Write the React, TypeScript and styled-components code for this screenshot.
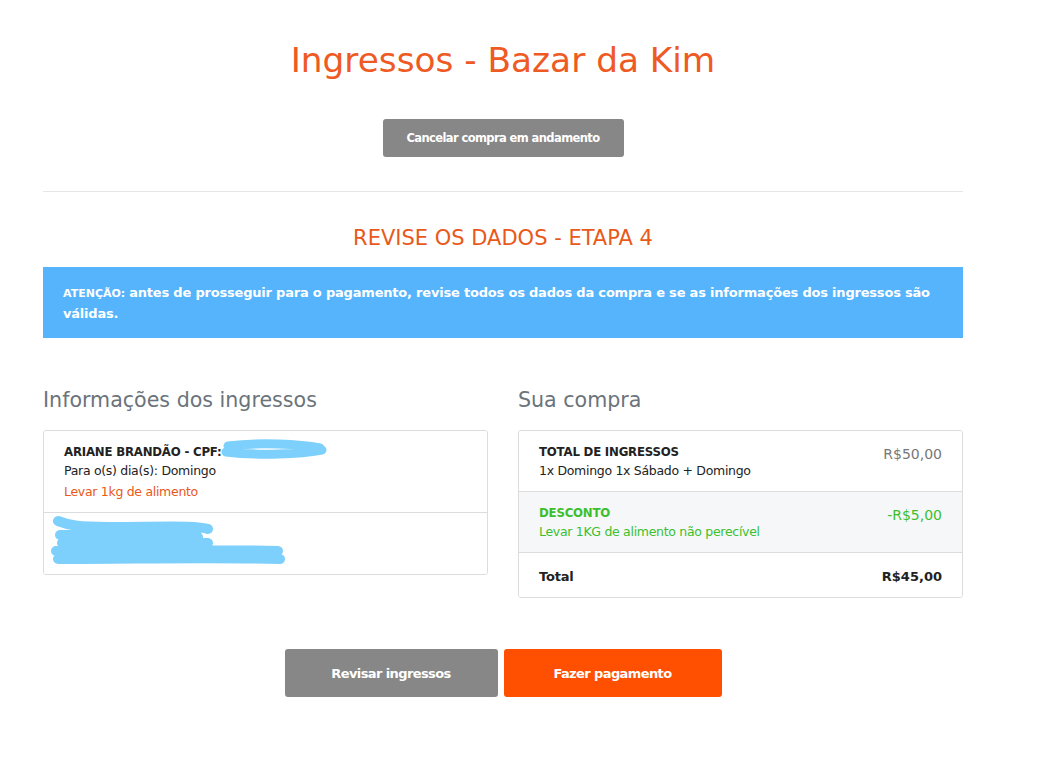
import React from "react";
import styled, { createGlobalStyle } from "styled-components";

const Global = createGlobalStyle`
  html, body { margin: 0; padding: 0; background: #fff; }
  body { font-family: "DejaVu Sans", "Open Sans", sans-serif; color: #333; }
  * { box-sizing: border-box; }
`;

const Container = styled.div`
  width: 950px;
  margin-left: 28px;
  padding: 0 15px;
`;

const Title = styled.h1`
  margin: 0;
  padding-top: 38px;
  text-align: center;
  font-size: 34.3px;
  font-weight: 400;
  color: #ee5a24;
  line-height: 44px;
`;

const CenterRow = styled.div<{ $top: number }>`
  display: flex;
  justify-content: center;
  gap: 6px;
  margin-top: ${(p) => p.$top}px;
`;

const Button = styled.button<{ $variant: "gray" | "orange"; $w: number; $h: number }>`
  width: ${(p) => p.$w}px;
  height: ${(p) => p.$h}px;
  border: 0;
  border-radius: 3px;
  background: ${(p) => (p.$variant === "orange" ? "#fe5000" : "#878787")};
  color: #fff;
  font-family: inherit;
  font-weight: 700;
  font-size: ${(p) => (p.$h > 40 ? 13 : 11.5)}px;
  letter-spacing: -0.6px;
  cursor: pointer;
`;

const Rule = styled.hr`
  border: 0;
  border-top: 1px solid #e6e6e6;
  margin: 34px 0 0;
`;

const StepTitle = styled.h2`
  margin: 32px 0 0;
  text-align: center;
  font-size: 21px;
  font-weight: 400;
  color: #e8591a;
  line-height: 28px;
`;

const Alert = styled.div`
  margin-top: 15px;
  background: #56b4fc;
  color: #fff;
  padding: 16px 20px 15px 20px;
  font-size: 13px;
  line-height: 20px;
  font-weight: 600;
  letter-spacing: -0.2px;
  height: 71px;
`;

const AlertLabel = styled.strong`
  font-size: 11px;
  font-weight: 800;
  letter-spacing: 0;
  margin-right: 4px;
`;

const AlertText = styled.span`
  font-weight: 600;
`;

const Columns = styled.div`
  display: grid;
  grid-template-columns: 1fr 1fr;
  column-gap: 30px;
  margin-top: 47px;
`;

const ColTitle = styled.h3`
  margin: 0 0 15px;
  font-size: 20.6px;
  font-weight: 400;
  color: #6b737b;
  line-height: 30px;
`;

const Card = styled.div`
  border: 1px solid #dcdcdc;
  border-radius: 3px;
  overflow: hidden;
`;

const Item = styled.div<{ $shade?: boolean; $h: number; $pt?: number }>`
  height: ${(p) => p.$h}px;
  padding: ${(p) => p.$pt ?? 12}px 20px 0;
  background: ${(p) => (p.$shade ? "#f5f7f8" : "#fff")};
  display: flex;
  justify-content: space-between;
  position: relative;
  & + & {
    border-top: 1px solid #dcdcdc;
  }
`;

const Lines = styled.div`
  display: flex;
  flex-direction: column;
`;

const Strong = styled.div<{ $green?: boolean; $big?: boolean }>`
  font-weight: 700;
  font-size: ${(p) => (p.$big ? 13 : 11.75)}px;
  line-height: 18px;
  letter-spacing: -0.2px;
  color: ${(p) => (p.$green ? "#3cbf2e" : "#222")};
`;

const Small = styled.div<{ $tone?: "orange" | "green" }>`
  font-size: 12.5px;
  line-height: 19px;
  letter-spacing: -0.3px;
  color: ${(p) => (p.$tone === "orange" ? "#e8591a" : p.$tone === "green" ? "#3cbf2e" : "#222")};
  margin-top: ${(p) => (p.$tone === "orange" ? 2 : 0)}px;
`;

const Price = styled.div<{ $tone: "gray" | "green" | "bold" }>`
  font-size: ${(p) => (p.$tone === "bold" ? 13 : 14)}px;
  line-height: 18px;
  padding-top: ${(p) => (p.$tone === "bold" ? 0 : 2)}px;
  font-weight: ${(p) => (p.$tone === "bold" ? 700 : 400)};
  color: ${(p) => (p.$tone === "green" ? "#3cbf2e" : p.$tone === "gray" ? "#777" : "#222")};
`;

const Scribble = styled.svg`
  position: absolute;
  pointer-events: none;
`;

export default function App() {
  return (
    <>
      <Global />
      <Container>
        <Title>Ingressos - Bazar da Kim</Title>
        <CenterRow $top={37}>
          <Button $variant="gray" $w={241} $h={38}>Cancelar compra em andamento</Button>
        </CenterRow>
        <Rule />
        <StepTitle>REVISE OS DADOS - ETAPA 4</StepTitle>
        <Alert>
          <AlertLabel>ATENÇÃO:</AlertLabel>
          <AlertText>antes de prosseguir para o pagamento, revise todos os dados da compra e se as informações dos ingressos são válidas.</AlertText>
        </Alert>
        <Columns>
          <div>
            <ColTitle>Informações dos ingressos</ColTitle>
            <Card>
              <Item $h={81}>
                <Lines>
                  <Strong>ARIANE BRANDÃO - CPF: </Strong>
                  <Small>Para o(s) dia(s): Domingo</Small>
                  <Small $tone="orange">Levar 1kg de alimento</Small>
                </Lines>
                <Scribble width="110" height="26" viewBox="0 0 110 26" style={{ left: 176, top: 5 }}>
                  <path d="M8 10 C 40 6, 80 8, 100 12 M6 16 C 40 20, 80 18, 102 14" stroke="#7dd0fb" strokeWidth="9" fill="none" strokeLinecap="round" />
                </Scribble>
              </Item>
              <Item $h={62}>
                <Scribble width="250" height="60" viewBox="0 0 250 60" style={{ left: 4, top: 0 }}>
                  <path d="M10 8 C 20 12, 30 14, 60 14 C 110 14, 150 12, 160 16 M12 22 C 60 22, 120 20, 150 24 M14 30 C 80 30, 120 28, 160 30 M8 38 C 80 38, 150 36, 230 38 M10 46 C 90 46, 160 44, 232 46" stroke="#7dd0fb" strokeWidth="10" fill="none" strokeLinecap="round" />
                </Scribble>
              </Item>
            </Card>
          </div>
          <div>
            <ColTitle>Sua compra</ColTitle>
            <Card>
              <Item $h={60}>
                <Lines>
                  <Strong>TOTAL DE INGRESSOS</Strong>
                  <Small>1x Domingo 1x Sábado + Domingo</Small>
                </Lines>
                <Price $tone="gray">R$50,00</Price>
              </Item>
              <Item $h={61} $shade>
                <Lines>
                  <Strong $green>DESCONTO</Strong>
                  <Small $tone="green">Levar 1KG de alimento não perecível</Small>
                </Lines>
                <Price $tone="green">-R$5,00</Price>
              </Item>
              <Item $h={45} $pt={15}>
                <Strong $big>Total</Strong>
                <Price $tone="bold">R$45,00</Price>
              </Item>
            </Card>
          </div>
        </Columns>
        <CenterRow $top={51}>
          <Button $variant="gray" $w={213} $h={48}>Revisar ingressos</Button>
          <Button $variant="orange" $w={218} $h={48}>Fazer pagamento</Button>
        </CenterRow>
      </Container>
    </>
  );
}
